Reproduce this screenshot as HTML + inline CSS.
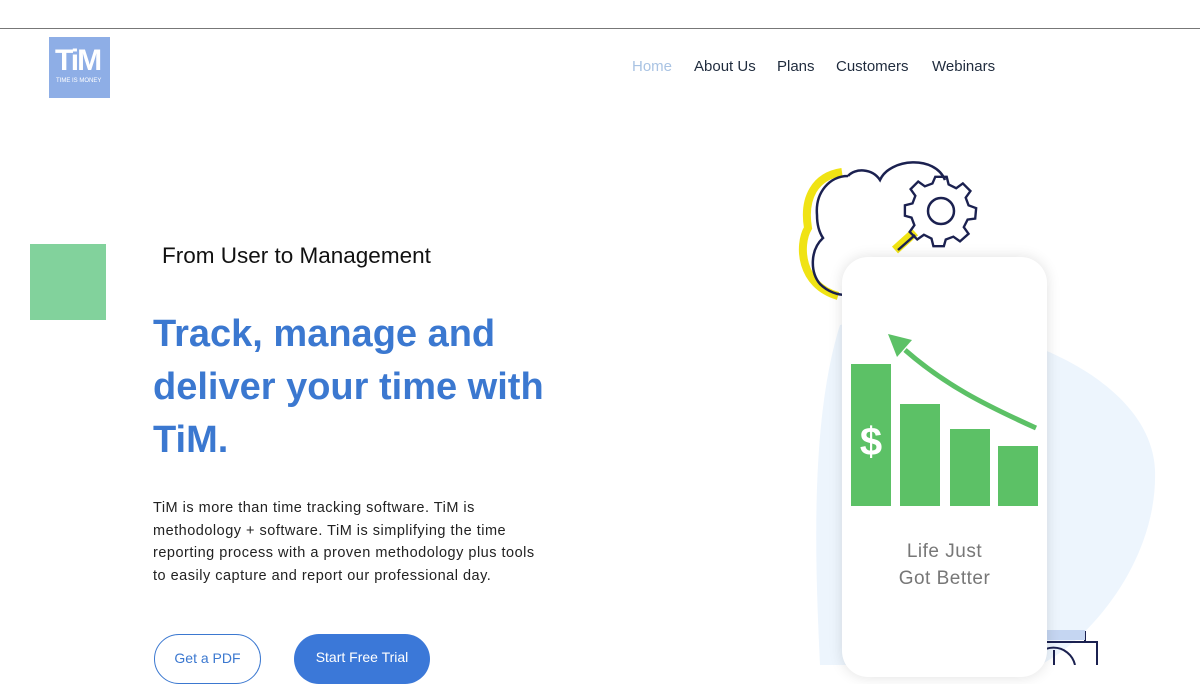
<!DOCTYPE html>
<html><head><meta charset="utf-8"><style>
*{margin:0;padding:0;box-sizing:border-box}
body{width:1200px;height:665px;overflow:hidden;background:#fff;font-family:"Liberation Sans",sans-serif;position:relative}
.abs{position:absolute}
.nav a{position:absolute;top:58px;font-size:15px;color:#1f2b3d;text-decoration:none;white-space:nowrap}
</style></head><body>
<div class="abs" style="left:0;top:28px;width:1200px;height:1px;background:#777"></div>
<div class="abs" style="left:49px;top:37px;width:61px;height:61px;background:#8eaee6">
 <div class="abs" style="left:6px;top:9px;color:#fff;font-weight:bold;font-size:30px;letter-spacing:-2px;line-height:30px">TiM</div>
 <div class="abs" style="left:7px;top:41px;color:#fff;font-size:6px;white-space:nowrap">TIME IS MONEY</div>
</div>
<div class="nav">
 <a style="left:632px;color:#a9c3e3">Home</a>
 <a style="left:694px">About Us</a>
 <a style="left:777px">Plans</a>
 <a style="left:836px">Customers</a>
 <a style="left:932px">Webinars</a>
</div>
<div class="abs" style="left:30px;top:244px;width:76px;height:76px;background:#82d29c"></div>
<div class="abs" style="left:162px;top:243px;font-size:22.5px;color:#111">From User to Management</div>
<div class="abs" style="left:153px;top:308px;width:440px;font-size:38px;font-weight:bold;color:#3b78d0;line-height:53px">Track, manage and deliver your time with TiM.</div>
<div class="abs" style="left:153px;top:497px;width:385px;font-size:14.5px;letter-spacing:0.5px;color:#222;line-height:22.5px">TiM is more than time tracking software. TiM is methodology + software. TiM is simplifying the time reporting process with a proven methodology plus tools to easily capture and report our professional day.</div>
<div class="abs" style="left:154px;top:634px;width:107px;height:50px;border:1px solid #3b78d0;border-radius:25px;color:#3b78d0;font-size:14px;text-align:center;padding-top:15px">Get a PDF</div>
<div class="abs" style="left:294px;top:634px;width:136px;height:50px;background:#3b78d8;border-radius:25px;color:#fff;font-size:14px;text-align:center;padding-top:15px">Start Free Trial</div>
<svg class="abs" style="left:0;top:0" width="1200" height="665">
 <path d="M840 325 C950 300 1150 360 1155 470 C1158 560 1090 640 1040 665 L820 665 C815 560 810 420 840 325Z" fill="#edf5fd"/>
 <path d="M842 172 C815 176 803 198 808 228 C798 245 800 285 838 296" fill="none" stroke="#f0e314" stroke-width="8"/>
 <path d="M895 250 L915 232" stroke="#f0e314" stroke-width="9"/>
 <path d="M848 176 C855 168 872 168 880 180 C890 158 935 155 945 180 M848 176 C830 176 815 192 817 215 C817 225 819 232 823 238 C810 250 810 272 820 284 C828 292 838 295 846 295 M898 250 L915 235" fill="none" stroke="#1b2150" stroke-width="2.5"/>
 <g transform="translate(941,211)" fill="none" stroke="#1b2150" stroke-width="2.5">
  <circle r="13"/>
  <path d="M-6 -33 L6 -33 L8 -25 L16 -21 L23 -26 L31 -18 L26 -11 L29 -3 L37 0 L36 11 L28 12 L24 20 L29 27 L20 35 L13 30 L5 33 L3 40 L-8 40 L-10 32 L-18 28 L-25 33 L-33 25 L-28 18 L-31 10 L-38 8 L-38 -3 L-30 -5 L-27 -13 L-32 -20 L-24 -28 L-17 -23 L-9 -26Z" transform="scale(0.95) translate(0,-3)"/>
 </g>
 <path d="M1085 631 L1085 642 L1097 642 L1097 665 M1045 642 L1097 642" fill="none" stroke="#1b2150" stroke-width="2"/>
 <rect x="1047" y="630" width="38" height="10" fill="#c5d6f2"/>
 <path d="M1032 665 A22 22 0 0 1 1075 665 M1054 650 L1054 665" fill="none" stroke="#1b2150" stroke-width="2"/>
</svg>
<div class="abs" style="left:842px;top:257px;width:205px;height:420px;background:#fff;border-radius:26px;box-shadow:0 0 14px rgba(0,0,0,0.12)"></div>
<svg class="abs" style="left:0;top:0" width="1200" height="665">
 <rect x="851" y="364" width="40" height="142" fill="#5cc166"/>
 <rect x="900" y="404" width="40" height="102" fill="#5cc166"/>
 <rect x="950" y="429" width="40" height="77" fill="#5cc166"/>
 <rect x="998" y="446" width="40" height="60" fill="#5cc166"/>
 <text x="871" y="455" font-family="Liberation Sans" font-weight="bold" font-size="40" fill="#fff" text-anchor="middle">$</text>
 <path d="M1036 428 C985 405 945 385 905 350" fill="none" stroke="#5cc166" stroke-width="5"/>
 <path d="M888 334 L912 340 L897 357Z" fill="#5cc166"/>
</svg>
<div class="abs" style="left:842px;top:538px;width:205px;text-align:center;font-size:19px;color:#777;line-height:27px;letter-spacing:0.5px">Life Just<br>Got Better</div>
</body></html>
